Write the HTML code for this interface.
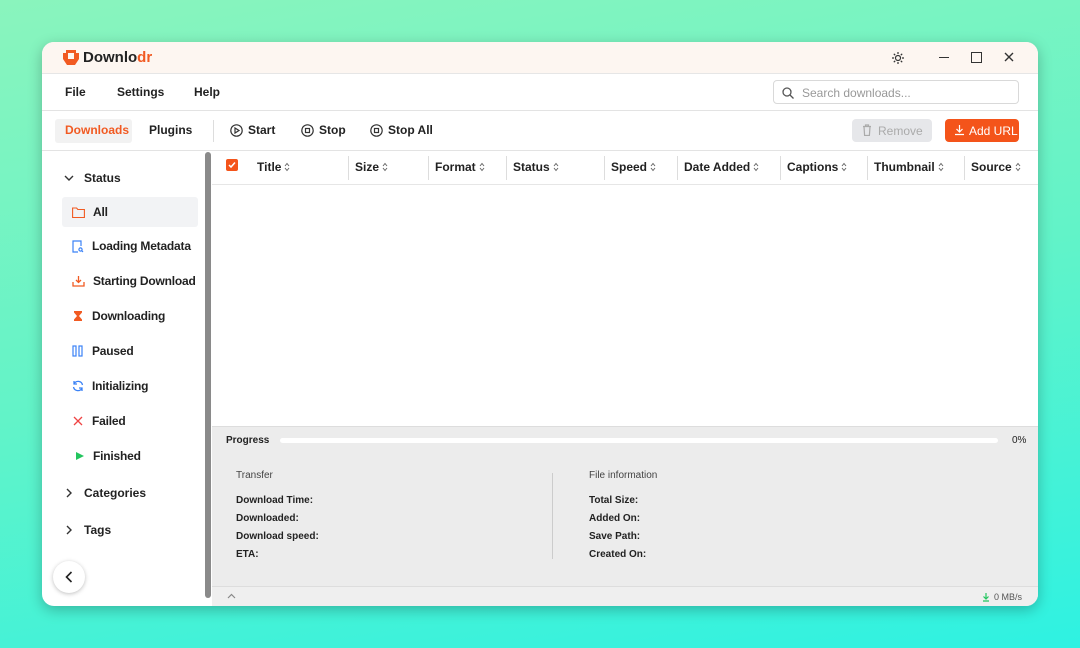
<!DOCTYPE html>
<html><head><meta charset="utf-8"><style>
*{box-sizing:border-box;margin:0;padding:0}
body{width:1080px;height:648px;overflow:hidden;font-family:"Liberation Sans",sans-serif;background:linear-gradient(170deg,#8af4bd 0%,#62f3c8 50%,#2ef2e2 100%);position:relative}
.win{position:absolute;left:42px;top:42px;width:996px;height:564px;background:#fff;border-radius:12px;overflow:hidden;box-shadow:0 4px 14px rgba(0,0,0,.25)}
.title{height:32px;background:#fdf6f1;border-bottom:1px solid #e6e6e6;position:relative}
.logo{position:absolute;left:20px;top:7px;display:flex;align-items:center;font-size:15px;font-weight:bold;color:#222}
.logo span{color:#f15a22}
.menu{height:37px;border-bottom:1px solid #e3e3e3;position:relative;font-size:12px;font-weight:bold;color:#222}
.menu .m{position:absolute;top:11px}
.search{position:absolute;left:731px;top:6px;width:246px;height:24px;border:1px solid #d9d9d9;border-radius:4px;font-weight:normal;color:#999;font-size:12px;padding:5px 0 0 28px}
.tool{height:40px;border-bottom:1px solid #e3e3e3;position:relative;font-size:12px;font-weight:bold;color:#222}
.tool .t{position:absolute;top:12px;display:flex;align-items:center;gap:5px}
.side{position:absolute;left:0;top:110px;width:162px;height:454px;font-size:12px;font-weight:bold;color:#222;white-space:nowrap}
.si{position:absolute;left:20px;width:136px;height:30px;display:flex;align-items:center;padding-left:10px;gap:8px;border-radius:3px;letter-spacing:-.2px}
.scroll{position:absolute;left:163px;top:110px;width:6px;height:446px;background:#8a8a8a;border-radius:3px}
.main{position:absolute;left:170px;top:110px;width:826px}
.thead{height:33px;border-bottom:1px solid #e6e6e6;position:relative;font-size:12px;font-weight:bold;color:#222}
.th{position:absolute;top:8px;display:flex;align-items:center;gap:3px;white-space:nowrap}
.dv{position:absolute;top:4px;width:1px;height:24px;background:#ddd}
.bottom{position:absolute;left:170px;top:384px;width:826px;height:160px;background:#ececec;border-top:1px solid #ddd;font-size:10px;color:#222}
.status{position:absolute;left:170px;top:544px;width:826px;height:20px;background:#efefef;border-top:1px solid #ddd;font-size:9px;color:#555}
.b{font-weight:bold;position:absolute}
</style></head><body>
<svg width="0" height="0" style="position:absolute"><defs><symbol id="srt" viewBox="0 0 6 10"><path d="M1 4l2-2.5L5 4M1 6l2 2.5L5 6" fill="none" stroke="#666" stroke-width="1"/></symbol></defs></svg>
<div class="win">
 <div class="title">
  <div class="logo"><svg width="18" height="17" viewBox="0 0 18 17"><path d="M4 1h10v3h3v6l-4 6H5L1 10V4h3z" fill="#f15a22"/><rect x="6" y="4" width="6" height="6" fill="#fdf6f1"/></svg><b style="margin-left:3px">Downlo<span>dr</span></b></div>
  <svg style="position:absolute;left:849px;top:9px" width="14" height="14" viewBox="0 0 14 14" stroke="#333" fill="none" stroke-width="1.2"><circle cx="7" cy="7" r="2.5"/><path d="M7 1v2M7 11v2M1 7h2M11 7h2M2.8 2.8l1.4 1.4M9.8 9.8l1.4 1.4M2.8 11.2l1.4-1.4M9.8 4.2l1.4-1.4"/></svg>
  <div style="position:absolute;left:897px;top:15px;width:10px;height:1.3px;background:#333"></div>
  <div style="position:absolute;left:929px;top:10px;width:11px;height:11px;border:1.3px solid #333"></div>
  <svg style="position:absolute;left:962px;top:10px" width="10" height="10" stroke="#333" stroke-width="1.4"><path d="M1 1l8 8M9 1l-8 8"/></svg>
 </div>
 <div class="menu"><span class="m" style="left:23px">File</span><span class="m" style="left:75px">Settings</span><span class="m" style="left:152px">Help</span>
  <div class="search"><svg style="position:absolute;left:8px;top:6px" width="12" height="12" fill="none" stroke="#555" stroke-width="1.3"><circle cx="5" cy="5" r="4"/><path d="M8 8l3.5 3.5"/></svg>Search downloads...</div></div>
 <div class="tool">
  <div style="position:absolute;left:13px;top:8px;width:77px;height:24px;background:#f2f2f2;border-radius:3px"></div>
  <span class="t" style="left:23px;color:#f15a22">Downloads</span>
  <span class="t" style="left:107px">Plugins</span>
  <div style="position:absolute;left:171px;top:9px;width:1px;height:22px;background:#ddd"></div>
  <span class="t" style="left:188px"><svg width="13" height="13" fill="none" stroke="#333" stroke-width="1.2"><circle cx="6.5" cy="6.5" r="5.7"/><path d="M5 4v5l4-2.5z"/></svg>Start</span>
  <span class="t" style="left:259px"><svg width="13" height="13" fill="none" stroke="#333" stroke-width="1.2"><circle cx="6.5" cy="6.5" r="5.7"/><rect x="4.5" y="4.5" width="4" height="4"/></svg>Stop</span>
  <span class="t" style="left:328px"><svg width="13" height="13" fill="none" stroke="#333" stroke-width="1.2"><circle cx="6.5" cy="6.5" r="5.7"/><rect x="4.5" y="4.5" width="4" height="4"/></svg>Stop All</span>
  <div style="position:absolute;left:810px;top:8px;width:80px;height:23px;background:#e6e7ea;border-radius:4px;color:#aaa;font-weight:normal;padding:5px 0 0 10px;display:flex;gap:6px;align-items:flex-start"><svg width="10" height="12" fill="none" stroke="#aaa" stroke-width="1.2"><path d="M1 2.5h8M3.5 2.5V1h3v1.5M2 2.5l.6 9h4.8l.6-9"/></svg>Remove</div>
  <div style="position:absolute;left:903px;top:8px;width:74px;height:23px;background:#f4541a;border-radius:4px;color:#fff;font-weight:normal;padding:5px 0 0 9px;display:flex;gap:4px;align-items:flex-start;white-space:nowrap"><svg width="11" height="12" fill="none" stroke="#fff" stroke-width="1.2"><path d="M5.5 1v7M2.5 5l3 3 3-3M1 10.5h9"/></svg>Add URL</div>
 </div>
 <div class="side">
  <div style="position:absolute;left:22px;top:19px;display:flex;gap:10px;align-items:center"><svg width="10" height="7" fill="none" stroke="#333" stroke-width="1.4"><path d="M1 1l4 4 4-4"/></svg>Status</div>
  <div class="si" style="top:45px;background:#f2f3f5"><svg width="13" height="11" fill="none" stroke="#f15a22" stroke-width="1.1"><path d="M.6 1h4l1.2 1.5h6.6v8H.6z"/></svg>All</div>
  <div class="si" style="top:79px"><svg width="12" height="13" fill="none" stroke="#3b82f6" stroke-width="1.2"><path d="M6 12H1V1h8v5"/><circle cx="8.5" cy="9.5" r="1.6"/><path d="M9.7 10.7l1.3 1.3"/></svg>Loading Metadata</div>
  <div class="si" style="top:114px"><svg width="13" height="12" fill="none" stroke="#f15a22" stroke-width="1.3"><path d="M6.5 1v6M4 5l2.5 2.5L9 5M1 7v4h11V7"/></svg>Starting Download</div>
  <div class="si" style="top:149px"><svg width="12" height="12" viewBox="0 0 12 12"><path d="M2 1h8v1.5L7 6l3 3.5V11H2V9.5L5 6 2 2.5z" fill="#f15a22"/></svg>Downloading</div>
  <div class="si" style="top:184px"><svg width="12" height="12" fill="none" stroke="#3b82f6" stroke-width="1.2"><rect x="1" y="1" width="3" height="10"/><rect x="7" y="1" width="3" height="10"/></svg>Paused</div>
  <div class="si" style="top:219px"><svg width="12" height="12" fill="none" stroke="#3b82f6" stroke-width="1.3"><path d="M10.5 5A4.5 4.5 0 0 0 2 4M1.5 7A4.5 4.5 0 0 0 10 8M2 1v3h3M10 11V8H7"/></svg>Initializing</div>
  <div class="si" style="top:254px"><svg width="12" height="12" stroke="#ef4444" stroke-width="1.3"><path d="M2 2l8 8M10 2l-8 8"/></svg>Failed</div>
  <div class="si" style="top:289px;padding-left:13px"><svg width="10" height="10"><path d="M1 1l8 4-8 4z" fill="#22c55e"/></svg>Finished</div>
  <div style="position:absolute;left:24px;top:334px;display:flex;gap:12px;align-items:center"><svg width="6" height="10" fill="none" stroke="#333" stroke-width="1.4"><path d="M1 1l4 4-4 4"/></svg>Categories</div>
  <div style="position:absolute;left:24px;top:371px;display:flex;gap:12px;align-items:center"><svg width="6" height="10" fill="none" stroke="#333" stroke-width="1.4"><path d="M1 1l4 4-4 4"/></svg>Tags</div>
  <div style="position:absolute;left:11px;top:409px;width:32px;height:32px;border-radius:50%;background:#fff;box-shadow:0 1px 4px rgba(0,0,0,.25);display:flex;align-items:center;justify-content:center"><svg width="8" height="12" fill="none" stroke="#222" stroke-width="1.6"><path d="M6.5 1l-5 5 5 5"/></svg></div>
 </div>
 <div class="scroll"></div>
 <div class="main">
  <div class="thead">
   <div style="position:absolute;left:14px;top:7px;width:12px;height:12px;background:#f4541a;border-radius:2px"><svg width="12" height="12" fill="none" stroke="#fff" stroke-width="1.5"><path d="M3 6l2 2 4-4.5"/></svg></div>
   <span class="th" style="left:45px">Title<svg width="6" height="10"><use href="#srt"/></svg></span><div class="dv" style="left:136px"></div>
   <span class="th" style="left:143px">Size<svg width="6" height="10"><use href="#srt"/></svg></span><div class="dv" style="left:216px"></div>
   <span class="th" style="left:223px">Format<svg width="6" height="10"><use href="#srt"/></svg></span><div class="dv" style="left:294px"></div>
   <span class="th" style="left:301px">Status<svg width="6" height="10"><use href="#srt"/></svg></span><div class="dv" style="left:392px"></div>
   <span class="th" style="left:399px">Speed<svg width="6" height="10"><use href="#srt"/></svg></span><div class="dv" style="left:465px"></div>
   <span class="th" style="left:472px">Date Added<svg width="6" height="10"><use href="#srt"/></svg></span><div class="dv" style="left:568px"></div>
   <span class="th" style="left:575px">Captions<svg width="6" height="10"><use href="#srt"/></svg></span><div class="dv" style="left:655px"></div>
   <span class="th" style="left:662px">Thumbnail<svg width="6" height="10"><use href="#srt"/></svg></span><div class="dv" style="left:752px"></div>
   <span class="th" style="left:759px">Source<svg width="6" height="10"><use href="#srt"/></svg></span>
  </div>
 </div>
 <div class="bottom">
  <span class="b" style="left:14px;top:8px">Progress</span>
  <div style="position:absolute;left:68px;top:11px;width:718px;height:5px;background:#fff;border-radius:3px"></div>
  <span style="position:absolute;left:800px;top:8px">0%</span>
  <span style="position:absolute;left:24px;top:43px;color:#444">Transfer</span>
  <span class="b" style="left:24px;top:68px">Download Time:</span>
  <span class="b" style="left:24px;top:86px">Downloaded:</span>
  <span class="b" style="left:24px;top:104px">Download speed:</span>
  <span class="b" style="left:24px;top:122px">ETA:</span>
  <div style="position:absolute;left:340px;top:46px;width:1px;height:86px;background:#ccc"></div>
  <span style="position:absolute;left:377px;top:43px;color:#444">File information</span>
  <span class="b" style="left:377px;top:68px">Total Size:</span>
  <span class="b" style="left:377px;top:86px">Added On:</span>
  <span class="b" style="left:377px;top:104px">Save Path:</span>
  <span class="b" style="left:377px;top:122px">Created On:</span>
 </div>
 <div class="status">
  <svg style="position:absolute;left:15px;top:6px" width="9" height="6" fill="none" stroke="#888" stroke-width="1.2"><path d="M1 5l3.5-3.5L8 5"/></svg>
  <svg style="position:absolute;left:770px;top:5px" width="8" height="10" fill="none" stroke="#22c55e" stroke-width="1.2"><path d="M4 1v6M1.5 4.5L4 7l2.5-2.5M1 9h6"/></svg>
  <span style="position:absolute;left:782px;top:5px">0 MB/s</span>
 </div>
</div>
</body></html>
